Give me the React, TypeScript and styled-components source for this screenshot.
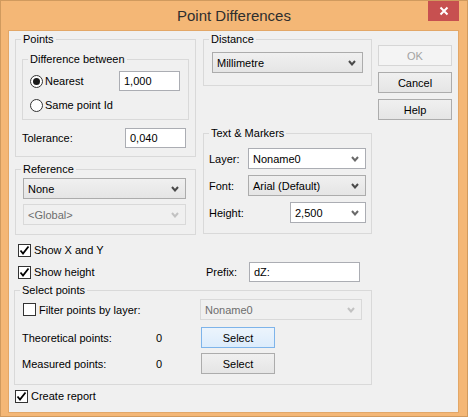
import React from "react";
import styled, { createGlobalStyle } from "styled-components";

const GlobalStyle = createGlobalStyle`
	html, body {
		margin: 0;
		padding: 0;
		background: #ffffff;
	}
	body {
		font-family: "Liberation Sans", Arial, sans-serif;
		font-size: 11px;
		color: #000000;
	}
	* {
		box-sizing: border-box;
	}
`;

const Window = styled.div`
	width: 468px;
	height: 417px;
	border: 1px solid #d09a5e;
	background: #f4b776;
	display: flex;
	flex-direction: column;
`;

const TitleBar = styled.div`
	height: 29px;
	display: grid;
	grid-template-columns: 1fr auto 1fr;
	align-items: center;
`;

const Title = styled.div`
	grid-column: 2;
	font-size: 15px;
	color: #2e2e2e;
`;

const CloseButton = styled.div`
	grid-column: 3;
	justify-self: end;
	align-self: start;
	width: 31px;
	height: 20px;
	margin-right: 8px;
	background: #c75050;
	display: flex;
	align-items: center;
	justify-content: center;
`;

const Client = styled.div`
	flex: 1;
	margin: 0 8px 3px 7px;
	border: 1px solid #e3a767;
	background: #f0f0f0;
	padding: 2px 0 0 6px;
	display: flex;
	gap: 6px;
`;

const MainColumn = styled.div`
	width: 357px;
	display: flex;
	flex-direction: column;
`;

const TopGrid = styled.div`
	display: grid;
	grid-template-columns: 181px 169px;
	column-gap: 7px;
	align-items: start;
`;

const Column = styled.div`
	display: flex;
	flex-direction: column;
`;

const Group = styled.fieldset<{ $top?: number; $shift?: number }>`
	margin: ${(p) => p.$top ?? 0}px 0 0 ${(p) => p.$shift ?? 0}px;
	padding: 0;
	min-width: 0;
	border: 1px solid #d9d9d9;
`;

const Legend = styled.legend`
	margin-left: 5px;
	padding: 0 2px;
	line-height: 13px;
	font-size: 11px;
`;

const GroupBody = styled.div<{ $pad: string }>`
	padding: ${(p) => p.$pad};
	display: flex;
	flex-direction: column;
`;

const Row = styled.div<{ $h?: number; $top?: number; $padRight?: number }>`
	height: ${(p) => p.$h ?? 20}px;
	margin-top: ${(p) => p.$top ?? 0}px;
	padding-right: ${(p) => p.$padRight ?? 0}px;
	display: flex;
	align-items: center;
	justify-content: space-between;
`;

const LabeledRow = styled.div<{ $top?: number; $left?: number }>`
	height: 21px;
	margin-top: ${(p) => p.$top ?? 0}px;
	display: grid;
	grid-template-columns: 39px 1fr;
	align-items: center;
	justify-items: end;
	& > span {
		justify-self: start;
	}
`;

const TextBox = styled.div<{ $w: number }>`
	width: ${(p) => p.$w}px;
	height: 20px;
	background: #ffffff;
	border: 1px solid #abadb3;
	padding-left: 4px;
	display: flex;
	align-items: center;
`;

type ComboKind = "list" | "edit" | "disabled";

const ComboBox = styled.div<{ $w?: number; $kind: ComboKind }>`
	width: ${(p) => (p.$w ? `${p.$w}px` : "100%")};
	height: 21px;
	padding: 0 6px 0 4px;
	display: flex;
	align-items: center;
	justify-content: space-between;
	border: 1px solid
		${(p) => (p.$kind === "disabled" ? "#d9d9d9" : p.$kind === "edit" ? "#abadb3" : "#acacac")};
	background: ${(p) =>
		p.$kind === "list"
			? "linear-gradient(#f0f0f0, #e5e5e5)"
			: p.$kind === "edit"
			? "#ffffff"
			: "#f0f0f0"};
	color: ${(p) => (p.$kind === "disabled" ? "#6d6d6d" : "#000000")};
`;

const Chevron = ({ color }: { color: string }) => (
	<svg width="8" height="6" viewBox="0 0 8 6">
		<polyline points="1,1 4,4.5 7,1" fill="none" stroke={color} strokeWidth="2" />
	</svg>
);

const Combo = ({ value, w, kind }: { value: string; w?: number; kind: ComboKind }) => (
	<ComboBox $w={w} $kind={kind}>
		<span>{value}</span>
		<Chevron color={kind === "disabled" ? "#c2c2c2" : kind === "edit" ? "#6a6a6a" : "#4a4a4a"} />
	</ComboBox>
);

const Choice = styled.label<{ $gap?: number; $indent?: number }>`
	display: flex;
	align-items: center;
	gap: ${(p) => p.$gap ?? 3}px;
	padding-left: ${(p) => p.$indent ?? 0}px;
`;

const Box = styled.span`
	width: 13px;
	height: 13px;
	border: 1px solid #333333;
	background: #ffffff;
	display: flex;
	align-items: center;
	justify-content: center;
	flex-shrink: 0;
`;

const Radio = styled.span<{ $on?: boolean }>`
	width: 13px;
	height: 13px;
	border: 1px solid #333333;
	border-radius: 50%;
	background: #ffffff;
	display: flex;
	align-items: center;
	justify-content: center;
	&::after {
		content: "";
		width: 7px;
		height: 7px;
		border-radius: 50%;
		background: ${(p) => (p.$on ? "#1a1a1a" : "transparent")};
	}
`;

const Check = ({ on }: { on?: boolean }) => (
	<Box>
		{on && (
			<svg width="11" height="11" viewBox="0 0 11 11">
				<polyline points="1.5,5.5 4,8.5 9.5,1.5" fill="none" stroke="#000" strokeWidth="1.8" />
			</svg>
		)}
	</Box>
);

type BtnKind = "normal" | "hot" | "disabled";

const Button = styled.div<{ $kind?: BtnKind }>`
	width: 74px;
	height: 21px;
	display: flex;
	align-items: center;
	justify-content: center;
	border: 1px solid
		${(p) => (p.$kind === "hot" ? "#7eb4ea" : p.$kind === "disabled" ? "#d6d6d6" : "#acacac")};
	background: ${(p) =>
		p.$kind === "hot"
			? "linear-gradient(#ecf4fc, #dcecfc)"
			: p.$kind === "disabled"
			? "#f4f4f4"
			: "linear-gradient(#f0f0f0, #e5e5e5)"};
	color: ${(p) => (p.$kind === "disabled" ? "#a3a3a3" : "#000000")};
`;

const ButtonColumn = styled.div`
	margin-top: 12px;
	display: flex;
	flex-direction: column;
	gap: 6px;
`;

const OptionRow = styled.div<{ $top: number; $indent?: number }>`
	height: 20px;
	margin-top: ${(p) => p.$top}px;
	padding-left: ${(p) => p.$indent ?? 0}px;
	display: grid;
	grid-template-columns: 188px 43px 111px;
	align-items: center;
`;

const PointsGrid = styled.div<{ $top?: number }>`
	height: 21px;
	margin-top: ${(p) => p.$top ?? 0}px;
	display: grid;
	grid-template-columns: 134px 44px 162px;
	align-items: center;
`;

const Span2 = styled.div`
	grid-column: span 2;
`;

const Shifted = styled.div`
	margin-left: 1px;
`;

const App = () => {
	return (
		<>
			<GlobalStyle />
			<Window>
				<TitleBar>
					<Title>Point Differences</Title>
					<CloseButton>
						<svg width="10" height="10" viewBox="0 0 10 10">
							<path d="M1.5 1.5 L8.5 8.5 M8.5 1.5 L1.5 8.5" stroke="#fff" strokeWidth="2" />
						</svg>
					</CloseButton>
				</TitleBar>
				<Client>
					<MainColumn>
						<TopGrid>
							<Column>
								<Group>
									<Legend>Points</Legend>
									<GroupBody $pad="7px 6px 8px 6px">
										<Group>
											<Legend>Difference between</Legend>
											<GroupBody $pad="5px 8px 4px 7px">
												<Row>
													<Choice $gap={2}>
														<Radio $on />
														Nearest
													</Choice>
													<TextBox $w={61}>1,000</TextBox>
												</Row>
												<Row $top={4}>
													<Choice $gap={2}>
														<Radio />
														Same point Id
													</Choice>
												</Row>
											</GroupBody>
										</Group>
										<Row $top={8} $padRight={3}>
											<span>Tolerance:</span>
											<TextBox $w={61}>0,040</TextBox>
										</Row>
									</GroupBody>
								</Group>
								<Group $top={6}>
									<Legend>Reference</Legend>
									<GroupBody $pad="2px 9px 9px 7px">
										<Combo kind="list" value="None" />
										<Row $h={21} $top={5}>
											<Combo kind="disabled" value="<Global>" />
										</Row>
									</GroupBody>
								</Group>
							</Column>
							<Column>
								<Group>
									<Legend>Distance</Legend>
									<GroupBody $pad="6px 8px 12px 8px">
										<Combo kind="list" value="Millimetre" />
									</GroupBody>
								</Group>
								<Group $top={41}>
									<Legend>Text &amp; Markers</Legend>
									<GroupBody $pad="8px 5px 10px 5px">
										<LabeledRow>
											<span>Layer:</span>
											<Combo kind="edit" w={118} value="Noname0" />
										</LabeledRow>
										<LabeledRow $top={6}>
											<span>Font:</span>
											<Combo kind="list" w={118} value="Arial (Default)" />
										</LabeledRow>
										<LabeledRow $top={6}>
											<span>Height:</span>
											<Combo kind="edit" w={76} value="2,500" />
										</LabeledRow>
									</GroupBody>
								</Group>
							</Column>
						</TopGrid>
						<OptionRow $top={5} $indent={3}>
							<Choice>
								<Check on />
								Show X and Y
							</Choice>
						</OptionRow>
						<OptionRow $top={2} $indent={3}>
							<Choice>
								<Check on />
								Show height
							</Choice>
							<span>Prefix:</span>
							<TextBox $w={111}>dZ:</TextBox>
						</OptionRow>
						<Group $top={2} $shift={-1}>
							<Legend>Select points</Legend>
							<GroupBody $pad="2px 0 10px 7px">
								<PointsGrid>
									<Span2>
										<Choice $indent={1}>
											<Check />
											Filter points by layer:
										</Choice>
									</Span2>
									<Combo kind="disabled" value="Noname0" />
								</PointsGrid>
								<PointsGrid $top={7}>
									<span>Theoretical points:</span>
									<span>0</span>
									<Shifted>
										<Button $kind="hot">Select</Button>
									</Shifted>
								</PointsGrid>
								<PointsGrid $top={5}>
									<span>Measured points:</span>
									<span>0</span>
									<Shifted>
										<Button>Select</Button>
									</Shifted>
								</PointsGrid>
							</GroupBody>
						</Group>
						<OptionRow $top={1}>
							<Choice>
								<Check on />
								Create report
							</Choice>
						</OptionRow>
					</MainColumn>
					<ButtonColumn>
						<Button $kind="disabled">OK</Button>
						<Button>Cancel</Button>
						<Button>Help</Button>
					</ButtonColumn>
				</Client>
			</Window>
		</>
	);
};

export default App;
